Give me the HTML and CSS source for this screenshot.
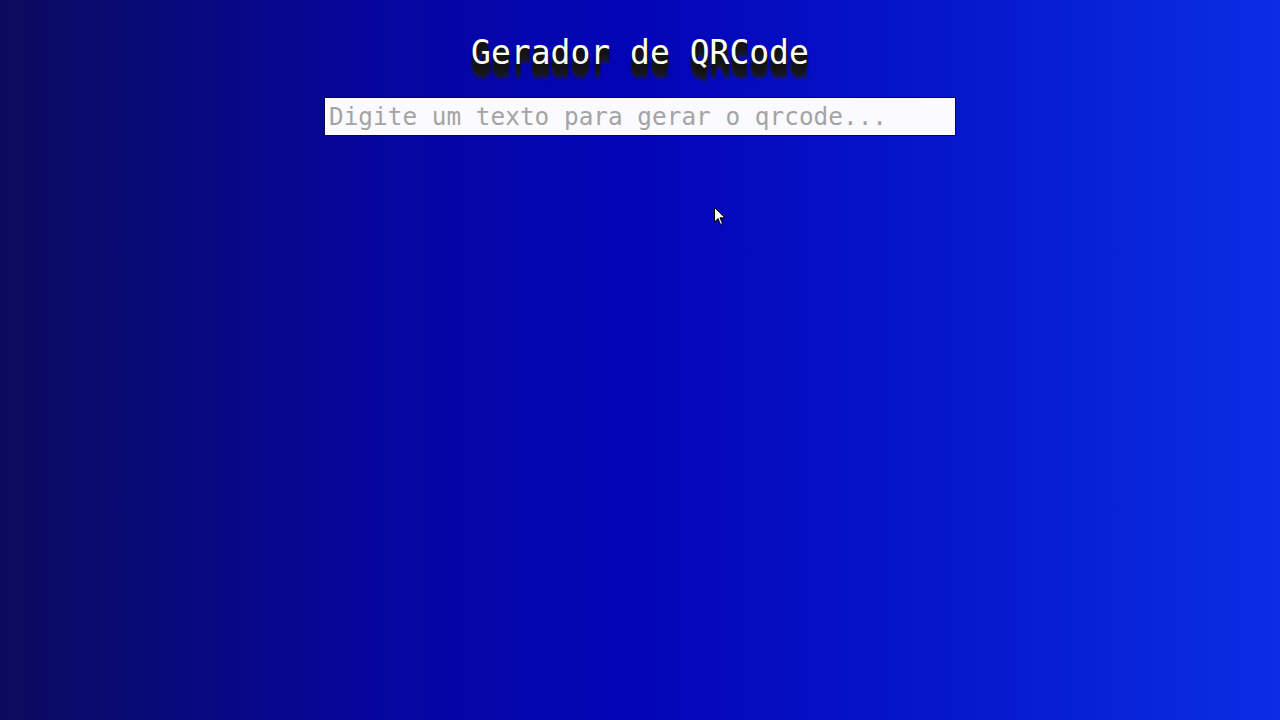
FILE: index.html
```html
<!DOCTYPE html>
<html lang="pt-BR">
<head>
<meta charset="utf-8">
<title>Gerador de QRCode</title>
<link rel="stylesheet" href="styles.css">
</head>
<body>
<main class="app">
  <h1 class="title">Gerador de QRCode</h1>
  <input class="text-input" type="text" placeholder="Digite um texto para gerar o qrcode...">
</main>
<svg class="cursor" width="12" height="19" viewBox="0 0 12 19"><path d="M0.5 0.5 L0.5 15 L4 11.5 L6.5 17.5 L8.5 16.6 L6 10.8 L11 10.8 Z" fill="#fff" stroke="#000" stroke-width="1"/></svg>
</body>
</html>
```
FILE: styles.css
```css
html, body {
  margin: 0;
  height: 100%;
}
body {
  background: linear-gradient(to right, #0b0b5e 0%, #0606a0 30%, #0404b8 50%, #0618cc 75%, #0a2ee4 100%);
  font-family: "DejaVu Sans Mono", "Liberation Mono", monospace;
  overflow: hidden;
}
.app {
  display: flex;
  flex-direction: column;
  align-items: center;
  padding-top: 30px;
}
.title {
  margin: 0;
  font-size: 33px;
  font-weight: normal;
  color: #fffff0;
  line-height: 46px;
  text-shadow:
    0 2px 1px #141414,
    0 4px 1px #141414,
    0 6px 1px #141414,
    0 8px 1px #161616,
    0 10px 2px #181818,
    0 12px 2px #1a1a1a,
    0 14px 3px #202020;
}
.text-input {
  margin-top: 21px;
  width: 632px;
  height: 39px;
  box-sizing: border-box;
  border: 1px solid #0a0a3a;
  background: #fafaff;
  padding: 0 4px;
  font-family: "DejaVu Sans Mono", "Liberation Mono", monospace;
  font-size: 24.4px;
  color: #333;
  outline: none;
}
.text-input::placeholder {
  color: #a4a4a4;
}
.cursor {
  position: absolute;
  left: 714px;
  top: 207px;
}
```
